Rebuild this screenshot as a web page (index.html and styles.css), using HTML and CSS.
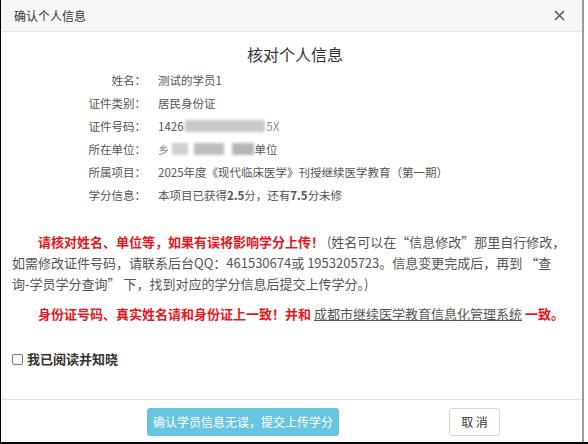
FILE: index.html
```html
<!DOCTYPE html>
<html lang="zh-CN">
<head>
<meta charset="utf-8">
<title>确认个人信息</title>
<link rel="stylesheet" href="styles.css">
</head>
<body>
<div class="screen">
  <div class="dialog">
    <div class="dlg-header">
      <span class="dlg-title">确认个人信息</span>
      <span class="dlg-close">
        <svg width="11" height="11" viewBox="0 0 11 11"><path d="M1 1L10 10M10 1L1 10" stroke="#555" stroke-width="1.5" fill="none"/></svg>
      </span>
    </div>
    <div class="dlg-body">
      <h2 class="heading">核对个人信息</h2>
      <div class="info">
        <div class="label">姓名：</div><div class="value">测试的学员1</div>
        <div class="label">证件类别：</div><div class="value">居民身份证</div>
        <div class="label">证件号码：</div><div class="value">1426<span class="blur b1"></span><span class="faint">5X</span></div>
        <div class="label">所在单位：</div><div class="value"><span class="faint">乡</span><span class="blur b2"></span><span class="blur b3"></span><span class="blur b4"></span>单位</div>
        <div class="label">所属项目：</div><div class="value">2025年度《现代临床医学》刊授继续医学教育（第一期）</div>
        <div class="label">学分信息：</div><div class="value">本项目已获得<b>2.5</b>分，还有<b>7.5</b>分未修</div>
      </div>
      <p class="notice"><span class="red">请核对姓名、单位等，如果有误将影响学分上传！</span> (姓名可以在“信息修改”那里自行修改，如需修改证件号码，请联系后台QQ：461530674或 1953205723。信息变更完成后，再到 “查<span class="nw">询-学员</span>学分查询” 下，找到对应的学分信息后提交上传学分。)</p>
      <p class="notice second"><span class="red">身份证号码、真实姓名请和身份证上一致！并和</span> <a class="sys-link">成都市继续医学教育信息化管理系统</a> <span class="red">一致。</span></p>
      <label class="agree"><span class="box"></span>我已阅读并知晓</label>
    </div>
    <div class="dlg-footer">
      <button class="btn btn-confirm">确认学员信息无误，提交上传学分</button>
      <button class="btn btn-cancel">取 消</button>
    </div>
  </div>
</div>
</body>
</html>
```

FILE: styles.css
```css
* { box-sizing: border-box; }
html, body { margin: 0; padding: 0; background: #fff; }
body {
  font-family: "Noto Sans CJK SC", "Noto Sans", sans-serif;
  color: #555;
}
.screen {
  width: 588px;
  height: 444px;
  display: flex;
  border-left: 1px solid #000;
  border-bottom: 2px solid #000;
  background: #fff;
}
.dialog {
  width: 583px;
  height: 442px;
  border-right: 2px solid #9b9b9b;
  display: flex;
  flex-direction: column;
  background: #fff;
}
.dlg-header {
  height: 32px;
  background: #f6f6f6;
  border-bottom: 1px solid #e4e4e4;
  display: flex;
  align-items: center;
  justify-content: space-between;
  padding: 0 17px 0 13px;
}
.dlg-title {
  font-size: 12px;
  color: #333;
  line-height: 16px;
}
.dlg-close {
  display: flex;
  align-items: center;
}
.dlg-body {
  flex: 1;
  padding: 10px 4px 0 11px;
}
.heading {
  margin: 0 0 3px;
  text-align: center;
  font-size: 16px;
  font-weight: normal;
  color: #333;
  line-height: 24px;
}
.info {
  display: grid;
  grid-template-columns: 134px auto;
  column-gap: 12px;
  font-size: 11.5px;
  line-height: 23px;
  color: #555;
}
.label { text-align: right; }
.value b { font-weight: bold; }
.blur {
  display: inline-block;
  height: 12px;
  vertical-align: -1px;
  background: #c9c9c9;
  filter: blur(1.5px);
}
.b1 { width: 80px; margin: 0 2px 0 1px; }
.b2 { width: 16px; margin-left: 2px; background: #d0d0d0; }
.b3 { width: 30px; margin-left: 6px; background: #bdbdbd; }
.b4 { width: 22px; margin: 0 1px 0 8px; background: #b5b5b5; }
.faint { color: #888; filter: blur(0.4px); }
.notice {
  margin: 24px 0 0;
  font-size: 13px;
  line-height: 21px;
  text-indent: 2em;
  color: #555;
}
.nw { white-space: nowrap; }
.notice.second { margin-top: 9px; }
.red { color: #e8161c; font-weight: bold; }
.sys-link {
  color: #555;
  text-decoration: underline;
}
.agree {
  display: flex;
  align-items: center;
  margin-top: 25px;
  font-size: 13px;
  font-weight: bold;
  color: #333;
  line-height: 20px;
}
.box {
  width: 11px;
  height: 11px;
  border: 1px solid #777;
  border-radius: 2px;
  margin-right: 4px;
  background: #fff;
}
.dlg-footer {
  height: 43px;
  border-top: 1px solid #e2e2e2;
  display: flex;
  align-items: flex-start;
  padding: 8px 0 0 146px;
  gap: 110px;
}
.btn {
  height: 28px;
  border-radius: 3px;
  font-family: "Noto Sans CJK SC", "Noto Sans", sans-serif;
  font-size: 12px;
  line-height: 16px;
  padding: 0;
}
.btn-confirm {
  width: 192px;
  background: #67c5e2;
  border: 1px solid #62c2df;
  color: #fff;
}
.btn-cancel {
  width: 51px;
  background: #fff;
  border: 1px solid #d6d6d6;
  color: #333;
}
```
